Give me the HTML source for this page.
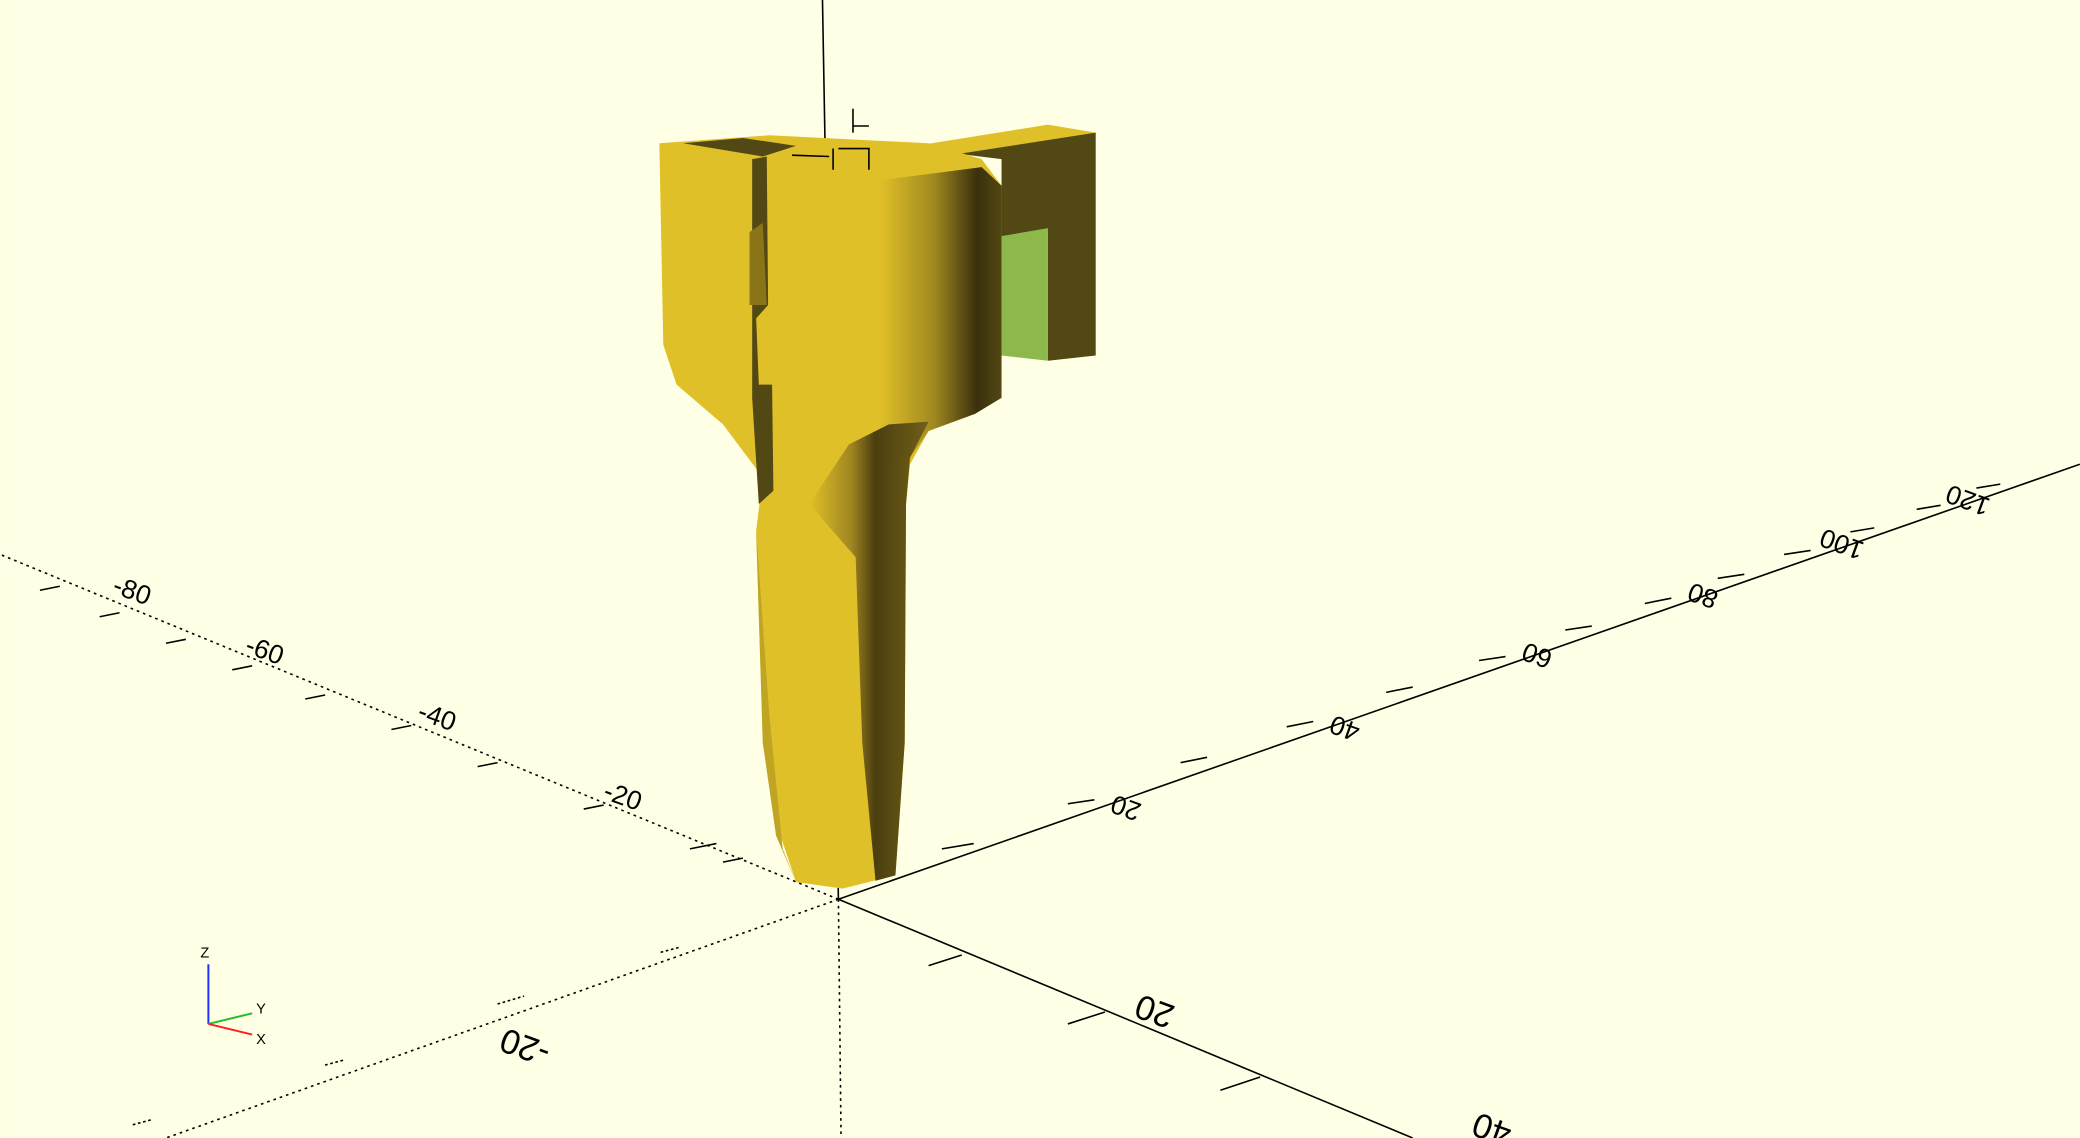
<!DOCTYPE html>
<html><head><meta charset="utf-8"><style>
html,body{margin:0;padding:0;background:#ffffe5;width:2080px;height:1138px;overflow:hidden}
svg{display:block}
text{font-family:"Liberation Sans",sans-serif}
</style></head><body>
<svg width="2080" height="1138" viewBox="0 0 1568 858" xmlns="http://www.w3.org/2000/svg">
<defs>
<linearGradient id="rs" x1="0" x2="1" y1="0" y2="0">
<stop offset="0" stop-color="#e0c028"/><stop offset="0.45" stop-color="#a08820"/><stop offset="0.8" stop-color="#3a300c"/><stop offset="1" stop-color="#524813"/>
</linearGradient>
<linearGradient id="hs" x1="0" x2="1" y1="0" y2="0">
<stop offset="0" stop-color="#e0c028"/><stop offset="0.35" stop-color="#9a8020"/><stop offset="0.55" stop-color="#3a300c"/><stop offset="1" stop-color="#6a5a18"/>
</linearGradient>
</defs>
<rect width="1568" height="858" fill="#ffffe5"/>
<g stroke="#000" stroke-width="1.2" fill="none">
<line x1="632" y1="678" x2="1568" y2="350"/>
<line x1="632" y1="678" x2="1065" y2="858"/>
<line x1="632" y1="678" x2="620" y2="0"/>
<line x1="632" y1="678" x2="0" y2="418" stroke-dasharray="2,3"/>
<line x1="632" y1="678" x2="125" y2="858" stroke-dasharray="2,3"/>
<line x1="632" y1="678" x2="634" y2="858" stroke-dasharray="2,3"/>
<path d="M710 640l24-4M805 606l20-3M890 575l20-4M970 548l20-4M1045 522l20-4M1115 498l20-3M1180 475l20-3M1240 455l20-4M1295 436l20-3M1345 418l20-3M1395 401l18-3M1445 384l18-3M1490 368l18-3"/>
<path d="M700 728l25-8M805 772l28-9M920 822l30-10"/>
<path d="M545 650l15-3M520 640l20-4M440 610l15-3M360 578l15-3M295 550l15-3M230 527l15-3M175 505l15-3M125 485l15-3M75 465l15-3M30 445l15-3"/>
<path d="M498 718l15-4M375 757l20-6M245 803l15-4M100 848l15-4" stroke-dasharray="2,2"/>
</g>
<g font-size="20" fill="#000">
<text x="830" y="615" transform="rotate(200 845 608)">20</text>
<text x="995" y="555" transform="rotate(200 1010 548)">40</text>
<text x="1140" y="500" transform="rotate(200 1155 493)">60</text>
<text x="1265" y="455" transform="rotate(200 1280 448)">80</text>
<text x="1375" y="418" transform="rotate(200 1390 411)">100</text>
<text x="1470" y="385" transform="rotate(200 1485 378)">120</text>
<text x="835" y="770" transform="rotate(200 860 760)" font-size="26">20</text>
<text x="345" y="795" transform="rotate(200 380 785)" font-size="26">-20</text>
<text x="455" y="610" transform="rotate(20 478 602)">-20</text>
<text x="315" y="550" transform="rotate(20 338 542)">-40</text>
<text x="185" y="500" transform="rotate(20 208 492)">-60</text>
<text x="85" y="455" transform="rotate(20 108 447)">-80</text>
<text x="1100" y="855" transform="rotate(200 1120 848)" font-size="26">40</text>
</g>
<!-- right bracket -->
<polygon points="690,112 790,100 826,100 826,268 790,272 790,175 755,178 755,120" fill="#524813"/>
<polygon points="755,178 790,172 790,272 755,268" fill="#8cb84c"/>
<polygon points="690,110 790,94 826,100 710,118" fill="#e0c028"/>
<!-- main body -->
<path d="M497,108 L580,102 L700,108 L740,120 L755,140 L755,300 L735,310 L700,325 L686,350 L683,380 L682,560 L675,660 L635,670 L600,665 L585,620 L575,560 L570,400 L575,360 L545,320 L510,290 L500,260 Z" fill="#e0c028"/>
<path d="M663,136 L740,126 L755,140 L755,300 L735,312 L700,325 L686,345 L663,345 Z" fill="url(#rs)"/>
<path d="M610,380 L640,335 L670,320 L700,318 L686,345 L683,380 L682,560 L675,660 L660,664 L650,560 L645,420 Z" fill="url(#hs)" opacity="0.9"/>
<path d="M570,400 L580,540 L590,640 L600,665 L585,630 L575,560 Z" fill="#c0a424"/>
<path d="M515,108 L560,104 L600,110 L575,118 Z" fill="#524813"/>
<path d="M567,120 L578,118 L579,230 L570,240 L572,290 L582,290 L583,370 L572,380 L567,300 Z" fill="#524813"/>
<path d="M565,175 L575,168 L578,230 L565,230 Z" fill="#8a7418"/>
<g stroke="#000" stroke-width="1.2" fill="none">
<path d="M597,117 L625,118 M628,112 L628,128 M632,112 L655,112 L655,128 M643,82 L643,100 M643,95 L655,95"/>
</g>
<g stroke-width="1.5">
<line x1="157" y1="772" x2="157" y2="727" stroke="#2030ff"/>
<line x1="157" y1="772" x2="190" y2="764" stroke="#20c020"/>
<line x1="157" y1="772" x2="190" y2="780" stroke="#ff2020"/>
</g>
<g font-size="11" fill="#000"><text x="151" y="722">Z</text><text x="193" y="764">Y</text><text x="193" y="787">X</text></g>
</svg>
</body></html>
